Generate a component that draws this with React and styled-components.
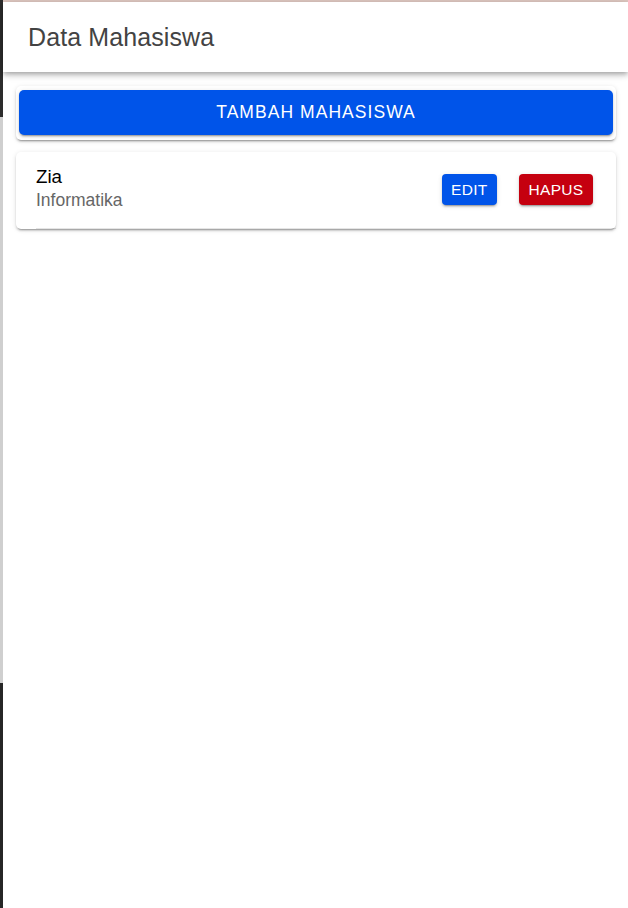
import React from "react";
import styled, { createGlobalStyle } from "styled-components";

const GlobalStyle = createGlobalStyle`
  html, body { margin: 0; padding: 0; background: #ffffff; }
  body { font-family: "Liberation Sans", Arial, Helvetica, sans-serif; }
  * { box-sizing: border-box; }
`;

const Frame = styled.div`
  display: flex;
  width: 628px;
  height: 908px;
  overflow: hidden;
  background: #ffffff;
`;

const SideStrip = styled.div`
  width: 3px;
  flex: 0 0 3px;
  display: flex;
  flex-direction: column;
`;

const StripSegment = styled.div`
  background: ${(p) => p.$color};
  height: ${(p) => (p.$h ? `${p.$h}px` : "auto")};
  flex: ${(p) => (p.$h ? "0 0 auto" : "1 1 auto")};
`;

const Main = styled.div`
  flex: 1;
  display: flex;
  flex-direction: column;
  min-width: 0;
`;

const TopLine = styled.div`
  height: 2px;
  background: #dec7c0;
`;

const Header = styled.header`
  position: relative;
  z-index: 2;
  height: 70px;
  display: flex;
  align-items: center;
  padding-left: 25px;
  background: #ffffff;
  box-shadow: 0 2px 4px -1px rgba(0, 0, 0, 0.2), 0 4px 5px 0 rgba(0, 0, 0, 0.14),
    0 1px 10px 0 rgba(0, 0, 0, 0.12);
`;

const Title = styled.h1`
  margin: 0;
  font-size: 25px;
  font-weight: 400;
  color: #434343;
  letter-spacing: 0.1px;
`;

const Content = styled.main`
  display: flex;
  flex-direction: column;
  gap: 12px;
  padding: 14px 12px 0 13px;
`;

const Card = styled.section`
  background: #ffffff;
  border-radius: 5px;
  box-shadow: 0 3px 1px -2px rgba(0, 0, 0, 0.2), 0 2px 2px 0 rgba(0, 0, 0, 0.14),
    0 1px 5px 0 rgba(0, 0, 0, 0.12);
  padding: ${(p) => p.$pad || "0"};
`;

const Button = styled.button`
  border: none;
  cursor: pointer;
  color: #ffffff;
  font-family: "Liberation Sans", Arial, Helvetica, sans-serif;
  font-weight: 400;
  text-transform: uppercase;
  border-radius: ${(p) => (p.$small ? "4px" : "5px")};
  background: ${(p) => (p.$danger ? "#c5000f" : "#0054e9")};
  box-shadow: 0 3px 1px -2px rgba(0, 0, 0, 0.2), 0 2px 2px 0 rgba(0, 0, 0, 0.14),
    0 1px 5px 0 rgba(0, 0, 0, 0.12);
  display: flex;
  align-items: center;
  justify-content: center;
  height: ${(p) => (p.$small ? "31px" : "45px")};
  width: ${(p) => (p.$block ? "100%" : "auto")};
  padding: ${(p) => (p.$small ? "0 9.5px" : "0 16px")};
  font-size: ${(p) => (p.$small ? "15.5px" : "17.5px")};
  letter-spacing: ${(p) => (p.$small ? "0.02em" : "0.06em")};
`;

const Item = styled.div`
  padding-left: 20px;
`;

const ItemInner = styled.div`
  display: flex;
  align-items: center;
  justify-content: space-between;
  padding-right: 23px;
  border-bottom: 1px solid rgba(0, 0, 0, 0.1);
`;

const Label = styled.div`
  display: flex;
  flex-direction: column;
  padding: 14px 0 18px;
`;

const Name = styled.div`
  font-size: 18.75px;
  line-height: 22px;
  color: #000000;
`;

const Major = styled.div`
  margin-top: 2px;
  font-size: 17.5px;
  line-height: 20px;
  color: #666666;
`;

const Actions = styled.div`
  display: flex;
  gap: 22px;
  margin-bottom: 1px;
`;

const students = [{ name: "Zia", major: "Informatika" }];

export default function App() {
  return (
    <>
      <GlobalStyle />
      <Frame>
        <SideStrip>
          <StripSegment $color="#2c2c2c" $h={117} />
          <StripSegment $color="#cfcfcf" $h={566} />
          <StripSegment $color="#262626" />
        </SideStrip>
        <Main>
          <TopLine />
          <Header>
            <Title>Data Mahasiswa</Title>
          </Header>
          <Content>
            <Card $pad="4px 3px 5px">
              <Button $block>Tambah Mahasiswa</Button>
            </Card>
            {students.map((s) => (
              <Card key={s.name}>
                <Item>
                  <ItemInner>
                    <Label>
                      <Name>{s.name}</Name>
                      <Major>{s.major}</Major>
                    </Label>
                    <Actions>
                      <Button $small>Edit</Button>
                      <Button $small $danger>Hapus</Button>
                    </Actions>
                  </ItemInner>
                </Item>
              </Card>
            ))}
          </Content>
        </Main>
      </Frame>
    </>
  );
}
